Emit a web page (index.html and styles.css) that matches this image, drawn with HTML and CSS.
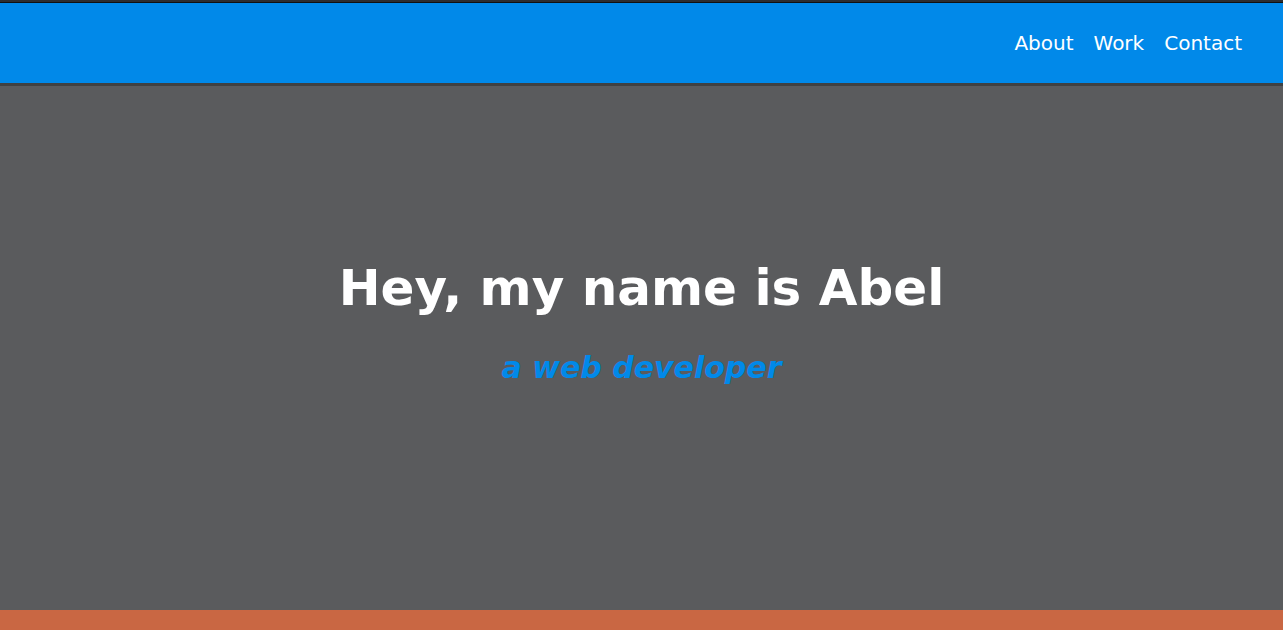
FILE: index.html
```html
<!DOCTYPE html>
<html lang="en">
<head>
<meta charset="utf-8">
<title>Abel</title>
<link rel="stylesheet" href="styles.css">
</head>
<body>
<header class="nav">
  <ul class="nav-list">
    <li><a class="nav-link" href="#about">About</a></li>
    <li><a class="nav-link" href="#work">Work</a></li>
    <li><a class="nav-link" href="#contact">Contact</a></li>
  </ul>
</header>
<section class="welcome">
  <h1 class="welcome-title">Hey, my name is Abel</h1>
  <p class="welcome-sub">a web developer</p>
</section>
<section class="projects"></section>
</body>
</html>
```

FILE: styles.css
```css
* { box-sizing: border-box; }
html, body { margin: 0; padding: 0; }
body {
  font-family: "DejaVu Sans", sans-serif;
  background: #5a5b5d;
  overflow: hidden;
}
.nav {
  height: 86px;
  background: #0189e9;
  border-top: 2px solid #2d2d2f;
  border-bottom: 3px solid #404142;
  box-shadow: inset 0 1px 0 #111;
  display: flex;
  justify-content: flex-end;
  align-items: center;
  padding-right: 41px;
}
.nav-list {
  list-style: none;
  margin: 0;
  padding: 0;
  display: flex;
  gap: 20px;
}
.nav-link {
  color: #ffffff;
  text-decoration: none;
  font-size: 20px;
}
.welcome {
  height: 524px;
  display: flex;
  flex-direction: column;
  align-items: center;
  justify-content: center;
  padding-bottom: 52px;
  color: #fff;
}
.welcome-title {
  margin: 0;
  font-size: 50px;
  font-weight: bold;
  line-height: normal;
}
.welcome-sub {
  margin: 33px 0 0;
  font-size: 30px;
  font-weight: bold;
  font-style: italic;
  color: #0189e9;
  line-height: normal;
}
.projects {
  height: 20px;
  background: #c96743;
}
```
